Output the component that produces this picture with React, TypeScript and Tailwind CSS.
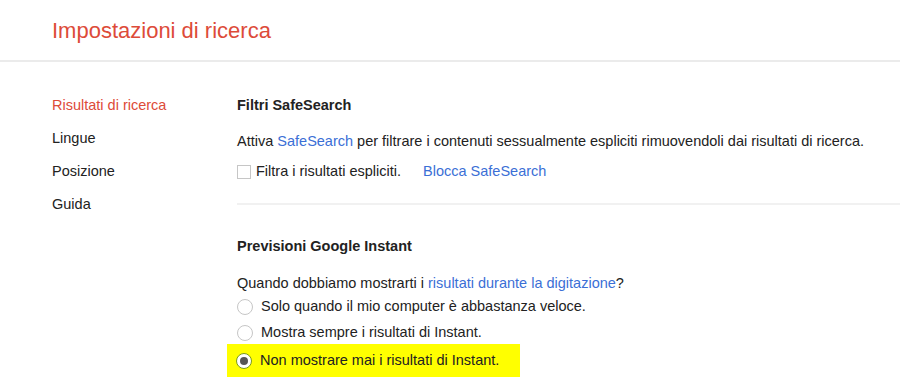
import React from 'react';

const navItems = ['Risultati di ricerca', 'Lingue', 'Posizione', 'Guida'];

const Radio = ({ checked }: { checked?: boolean }) => (
  <span
    className={`w-[16px] h-[16px] rounded-full border flex items-center justify-center shrink-0 ${
      checked ? 'border-[#7a9a1a] bg-white' : 'border-[#c6c6c6] bg-white'
    }`}
  >
    {checked && <span className="w-[8px] h-[8px] rounded-full bg-[#555]" />}
  </span>
);

export default function App() {
  return (
    <div className="w-[900px] h-[382px] bg-white overflow-hidden text-[14.5px] text-[#222]" style={{ fontFamily: '"Liberation Sans", Arial, sans-serif' }}>
      {/* Header */}
      <div className="h-[62px] border-b-2 border-[#ebebeb] pl-[52px] pt-[17px]">
        <h1 className="text-[22px] leading-[28px] text-[#dd4b39]">Impostazioni di ricerca</h1>
      </div>

      <div className="flex pt-[34px]">
        {/* Sidebar */}
        <nav className="w-[237px] pl-[52px] flex flex-col gap-[15px] shrink-0">
          {navItems.map((item, i) => (
            <div key={item} className={`leading-[18px] ${i === 0 ? 'text-[#dd4b39]' : 'text-[#222]'}`}>
              {item}
            </div>
          ))}
        </nav>

        {/* Content */}
        <div className="flex-1">
          <section className="border-b-2 border-[#f1f1f1] pb-[22px]">
            <h2 className="font-bold leading-[18px]">Filtri SafeSearch</h2>
            <p className="mt-[18px] leading-[18px]">
              Attiva <span className="text-[#3b6fd6]">SafeSearch</span> per filtrare i contenuti sessualmente espliciti rimuovendoli dai risultati di ricerca.
            </p>
            <div className="mt-[13px] flex items-center h-[18px]">
              <span className="w-[14px] h-[14px] border border-[#c6c6c6] bg-white mr-[5px]" />
              <span>Filtra i risultati espliciti.</span>
              <span className="ml-[22px] text-[#3b6fd6]">Blocca SafeSearch</span>
            </div>
          </section>

          <section className="pt-[32px]">
            <h2 className="font-bold leading-[18px]">Previsioni Google Instant</h2>
            <p className="mt-[19px] leading-[18px]">
              Quando dobbiamo mostrarti i <span className="text-[#3b6fd6]">risultati durante la digitazione</span>?
            </p>
            <div className="flex flex-col">
              <label className="flex items-center gap-[8px] h-[28px] pt-[2px]">
                <Radio />
                <span>Solo quando il mio computer è abbastanza veloce.</span>
              </label>
              <label className="flex items-center gap-[8px] h-[24px] pt-[2px]">
                <Radio />
                <span>Mostra sempre i risultati di Instant.</span>
              </label>
              <label className="flex items-center gap-[8px] h-[33px] w-[293px] -ml-[10px] pl-[9px] bg-[#ffff00]">
                <Radio checked />
                <span>Non mostrare mai i risultati di Instant.</span>
              </label>
            </div>
          </section>
        </div>
      </div>
    </div>
  );
}
